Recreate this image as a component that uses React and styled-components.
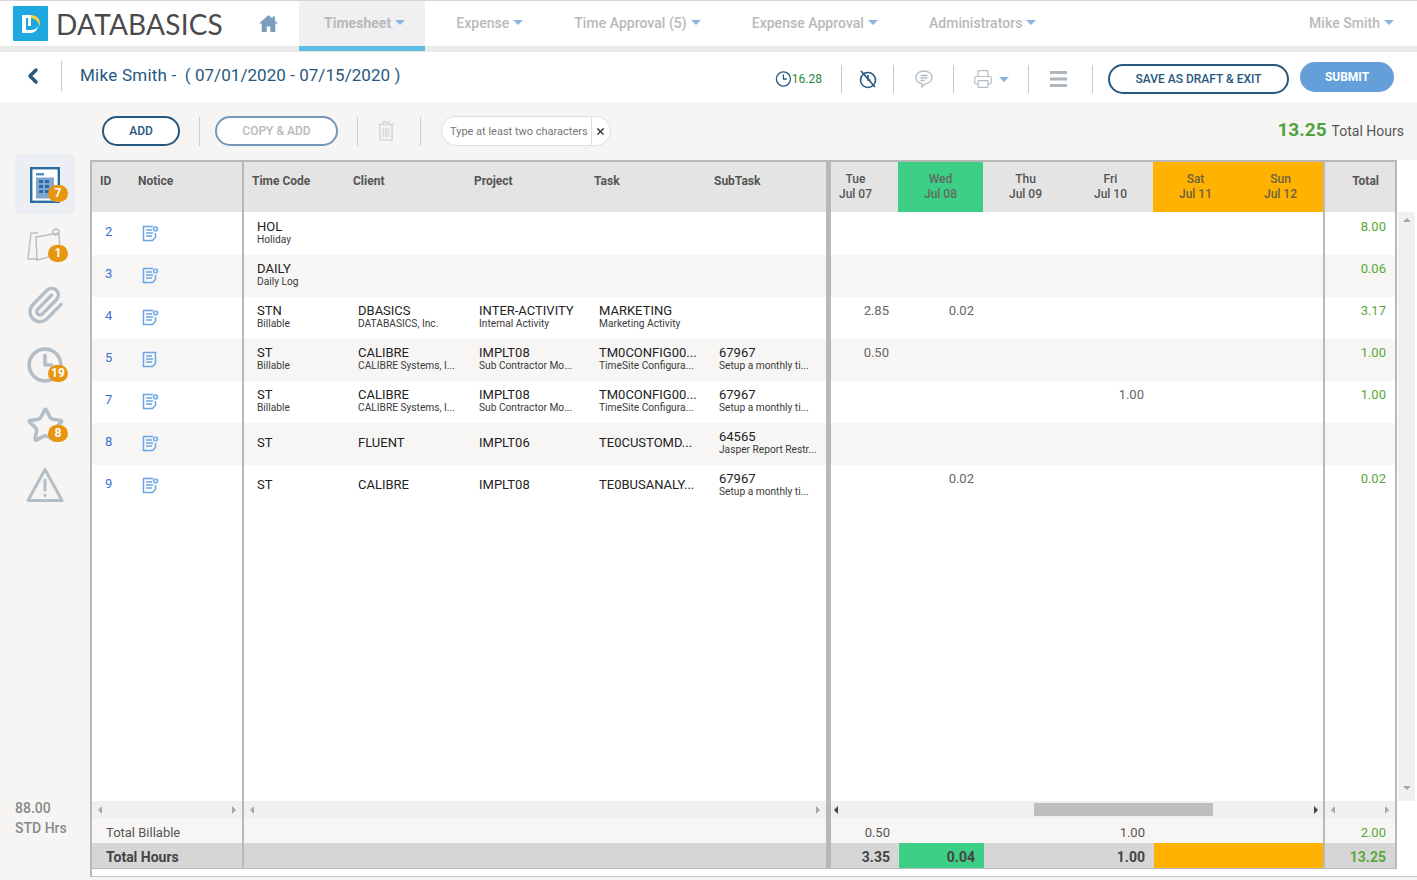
import React from 'react';
import styled, { createGlobalStyle } from 'styled-components';
import { Paperclip, Clock3, Star, Printer, ChevronLeft, X } from 'lucide-react';

const GlobalStyle = createGlobalStyle`
  html, body {
    margin: 0;
    height: 100%;
    overflow: hidden;
    background: #f6f5f4;
    font-family: Roboto, "Liberation Sans", sans-serif;
  }
  * { box-sizing: border-box; }
`;

const Page = styled.div`
  height: 880px;
  display: flex;
  flex-direction: column;
  border-top: 1px solid #d4d4d4;
`;

/* top nav */
const Nav = styled.nav`
  height: 51px;
  flex: none;
  display: flex;
  background: #fff;
  border-bottom: 6px solid #ebebeb;
`;

const Brand = styled.div`
  width: 299px;
  display: flex;
  align-items: center;
  padding-left: 13px;
`;

const BrandName = styled.span`
  margin-left: 8px;
  font-family: Lato, sans-serif;
  font-size: 28px;
  color: #4a4a4a;
  letter-spacing: 0.2px;
`;

const HomeIcon = styled.svg`
  margin-left: 36px;
  width: 19px;
  height: 17px;
`;

const NavItem = styled.div`
  display: flex;
  align-items: center;
  height: 50px;
  padding: 0 ${(p) => (p.$right ? '23px' : '20px')} ${(p) => (p.$active ? '2px' : '7px')} ${(p) => (p.$active ? '25px' : '31px')};
  font-size: 14px;
  letter-spacing: 0.03px;
  font-weight: ${(p) => (p.$active ? 700 : 500)};
  color: #b9b9b9;
  background: ${(p) => (p.$active ? '#f0f0f3' : 'transparent')};
  border-bottom: ${(p) => (p.$active ? '5px solid #5bbce4' : 'none')};
  margin-left: ${(p) => (p.$right ? 'auto' : '0')};
`;

const Caret = styled.span`
  display: inline-block;
  margin-left: ${(p) => p.$ml || 4}px;
  width: 0;
  height: 0;
  border-left: 5px solid transparent;
  border-right: 5px solid transparent;
  border-top: 5px solid #8cb6e2;
`;

/* name + actions */
const SubHeader = styled.header`
  height: 50px;
  flex: none;
  display: flex;
  align-items: center;
  background: #fff;
  padding-right: 23px;
`;

const Back = styled.div`
  width: 62px;
  height: 30px;
  margin-top: -3px;
  padding-left: 21px;
  display: flex;
  align-items: center;
  color: #26577f;
  border-right: 1px solid #c8c8c8;
`;

const Title = styled.h1`
  margin: -4px 0 0 18px;
  font-size: 17px;
  font-weight: 400;
  color: #26577f;
  letter-spacing: 0.05px;
  white-space: pre;
`;

const TitleName = styled.span`
  letter-spacing: 0.25px;
`;

const Tools = styled.div`
  margin-left: auto;
  padding-top: 4px;
  display: flex;
  align-items: center;
`;

const Tool = styled.div`
  height: 28px;
  width: ${(p) => p.$w}px;
  padding-right: ${(p) => p.$pr || 0}px;
  display: flex;
  align-items: center;
  justify-content: center;
  color: #b4bcc3;
  border-right: 1px solid #c8c8c8;
`;

const TimeValue = styled.span`
  font-size: 12px;
  color: #1f8a3c;
`;

const OutlineButton = styled.button`
  height: 30px;
  padding: 0;
  width: ${(p) => p.$w}px;
  margin-left: ${(p) => p.$ml || 0}px;
  border: 2px solid ${(p) => (p.$muted ? '#7297b8' : '#26577f')};
  border-radius: 15px;
  background: #fff;
  font: 500 12px Roboto, sans-serif;
  color: ${(p) => (p.$muted ? '#b9b9b9' : '#26577f')};
`;

const SubmitButton = styled.button`
  height: 30px;
  width: 94px;
  margin: -4px 0 0 11px;
  border: 0;
  border-radius: 15px;
  background: #659fda;
  color: #fff;
  font: 700 12px Roboto, sans-serif;
`;

/* main area */
const Body = styled.div`
  flex: 1;
  display: flex;
  min-height: 0;
`;

const Sidebar = styled.aside`
  width: 90px;
  flex: none;
  display: flex;
  flex-direction: column;
  align-items: flex-start;
  padding: 52px 0 42px 15px;
`;

const SideItem = styled.div`
  position: relative;
  width: 60px;
  height: 60px;
  padding-top: ${(p) => (p.$active ? 1 : 2)}px;
  display: flex;
  align-items: center;
  justify-content: center;
  color: #b4bec6;
  border-radius: 6px;
  background: ${(p) => (p.$active ? '#ebeff4' : 'transparent')};
`;

const Badge = styled.span`
  position: absolute;
  right: 7px;
  bottom: 12px;
  min-width: 20px;
  height: 17px;
  border-radius: 9px;
  background: #e8950f;
  color: #fff;
  font-size: 12px;
  font-weight: 700;
  line-height: 17px;
  text-align: center;
`;

const StdHours = styled.div`
  margin-top: auto;
  font-size: 14px;
  font-weight: 500;
  line-height: 20px;
  color: #8a8a8a;
`;

const Content = styled.main`
  flex: 1;
  min-width: 0;
  display: flex;
  flex-direction: column;
`;

const Toolbar = styled.div`
  height: 58px;
  flex: none;
  display: flex;
  align-items: center;
  padding: 0 13px 0 12px;
`;

const Sep = styled.span`
  width: 1px;
  height: 29px;
  margin: 0 ${(p) => p.$r}px 0 ${(p) => p.$l}px;
  background: #ccd0d4;
`;

const Search = styled.div`
  width: 170px;
  height: 30px;
  display: flex;
  align-items: center;
  border: 1px solid #ddd;
  border-radius: 15px;
  background: #fff;
  padding-left: 8px;
  font-size: 11px;
  color: #777;
  white-space: nowrap;
`;

const SearchClear = styled.span`
  margin-left: 3px;
  height: 28px;
  flex: 1;
  display: flex;
  align-items: center;
  justify-content: center;
  border-left: 1px solid #ddd;
  color: #222;
`;

const HoursSummary = styled.div`
  margin: -4px 0 0 auto;
  font-size: 14px;
  color: #555;
`;

const HoursBig = styled.b`
  font-size: 19px;
  font-weight: 700;
  color: #4ea23c;
  margin-right: 5px;
`;

const GridFrame = styled.div`
  flex: 1;
  display: flex;
  min-height: 0;
  background: #fff;
  border-left: 2px solid #b8b8b8;
  border-bottom: 1px solid #c4c4c4;
  margin-bottom: 3px;
  padding-bottom: 7px;
`;

const Panels = styled.div`
  width: 1305px;
  flex: none;
  display: flex;
  border-top: 2px solid #b8b8b8;
  border-bottom: 1px solid #b8b8b8;
  border-right: 2px solid #b8b8b8;
`;

const Panel = styled.section`
  width: ${(p) => p.$w}px;
  flex: none;
  display: flex;
  flex-direction: column;
  overflow: hidden;
  border-right: ${(p) => p.$divider || 0}px solid #b8b8b8;
`;

const HeadRow = styled.div`
  height: 50px;
  flex: none;
  display: ${(p) => (p.$cols ? 'grid' : 'flex')};
  grid-template-columns: ${(p) => p.$cols};
  padding-left: ${(p) => p.$pl || 0}px;
  background: #e4e4e4;
  font-size: 12px;
  font-weight: 700;
  color: #555;
`;

const HeadCell = styled.div`
  padding: 12px 0 0 ${(p) => (p.$flush ? 0 : 4)}px;
  line-height: 15px;
`;

const Rows = styled.div`
  flex: 1;
  padding-top: 1px;
`;

const Row = styled.div`
  height: 42px;
  display: ${(p) => (p.$cols ? 'grid' : 'flex')};
  grid-template-columns: ${(p) => p.$cols};
  padding-left: ${(p) => p.$pl || 0}px;
  background: ${(p) => (p.$alt ? '#f7f6f5' : '#fff')};
`;

const IdCell = styled.div`
  padding: 11px 0 0 5px;
  font-size: 13px;
  color: #3a6fd0;
`;

const NoticeCell = styled.div`
  padding: 12px 0 0 4px;
`;

const CodeCell = styled.div`
  padding-left: 9px;
  min-width: 0;
  display: flex;
  flex-direction: column;
  justify-content: center;
  padding-bottom: 2px;
`;

const CodeMain = styled.div`
  font-size: 13px;
  line-height: 14px;
  color: #222;
  white-space: nowrap;
`;

const CodeSub = styled.div`
  font-size: 10.2px;
  line-height: 12px;
  margin-bottom: 1px;
  color: #3a3a3a;
  white-space: nowrap;
`;

const DayStrip = styled.div`
  display: flex;
  height: 100%;
  margin-left: ${(p) => p.$shift}px;
`;

const DayHead = styled.div`
  width: 85px;
  flex: none;
  padding-top: 10px;
  text-align: center;
  font-weight: 500;
  line-height: 15px;
  background: ${(p) => p.$bg || 'transparent'};
  color: ${(p) => p.$fg || '#555'};
`;

const HourCell = styled.div`
  width: 85px;
  flex: none;
  padding: 6px 9px 0 0;
  text-align: right;
  font-size: 13px;
  color: #666;
`;

const TotalHead = styled.div`
  width: 100%;
  padding: 12px 16px 0 0;
  text-align: right;
  line-height: 15px;
`;

const TotalCell = styled.div`
  width: 100%;
  padding: 6px 9px 0 0;
  text-align: right;
  font-size: 13px;
  color: #5aa83a;
`;

const HScroll = styled.div`
  height: 17px;
  flex: none;
  display: flex;
  align-items: center;
  padding: ${(p) => (p.$tight ? '0 5px 0 3px' : '0 6px')};
  background: #f0f0f0;
`;

const Arrow = styled.span`
  width: 0;
  height: 0;
  border-top: 4px solid transparent;
  border-bottom: 4px solid transparent;
  border-${(p) => (p.$dir === 'left' ? 'right' : 'left')}: 4px solid ${(p) => (p.$dark ? '#444' : '#a8a8a8')};
  margin-left: ${(p) => (p.$end ? 'auto' : '0')};
`;

const Thumb = styled.span`
  width: 179px;
  height: 13px;
  margin-left: 196px;
  background: #bebebe;
`;

const FootRow = styled.div`
  height: 25px;
  flex: none;
  display: flex;
  overflow: hidden;
  line-height: 29px;
  background: ${(p) => (p.$total ? '#d6d6d6' : '#f7f6f5')};
  font-size: ${(p) => (p.$total ? 14 : 13)}px;
  font-weight: ${(p) => (p.$total ? 700 : 400)};
  color: ${(p) => (p.$total ? '#444' : '#555')};
`;

const FootLabel = styled.span`
  padding-left: 14px;
`;

const FootCell = styled.div`
  width: 85px;
  flex: none;
  height: 100%;
  padding-right: 9px;
  text-align: right;
  background: ${(p) => p.$bg || 'transparent'};
`;

const FootTotal = styled.div`
  width: 100%;
  padding-right: 9px;
  text-align: right;
  color: #5aa83a;
`;

const VScroll = styled.div`
  flex: 1;
  margin: 52px 2px 68px 1px;
  padding: 6px 0 11px;
  display: flex;
  flex-direction: column;
  justify-content: space-between;
  align-items: center;
  background: #f0f0f0;
`;

const VArrow = styled.span`
  width: 0;
  height: 0;
  border-left: 4px solid transparent;
  border-right: 4px solid transparent;
  border-${(p) => (p.$up ? 'bottom' : 'top')}: 4px solid #a8a8a8;
`;

const NoticeIcon = ({ plus }) => (
  <svg width="17" height="17" viewBox="0 0 17 17" fill="none" stroke="#6aa5e3">
    <path d="M11 1.500H1.500v14h9l3-3V8" strokeWidth="1.500" />
    <path d="M4 5h6M4 8h7M4 11h6" strokeWidth="1.300" />
    {plus ? (
      <>
        <circle cx="13.500" cy="4" r="3" fill="#6aa5e3" stroke="#fff" strokeWidth="0.6" />
        <path d="M12 4h3M13.500 2.500v3" stroke="#fff" strokeWidth="0.8" />
      </>
    ) : (
      <path d="M11 1.500h2.500V8" strokeWidth="1.500" />
    )}
  </svg>
);

const TimesheetIcon = () => (
  <svg width="30" height="36" viewBox="0 0 30 36">
    <rect x="1.200" y="1.200" width="27.600" height="33.600" fill="#fff" stroke="#2b6aa3" strokeWidth="2.400" />
    <rect x="6" y="6" width="8" height="2.500" fill="#5d8dbb" />
    <rect x="6" y="10.500" width="18" height="21" fill="#7fa6cc" />
    <path d="M9 13h4v3H9zM15 13h4v3h-4zM9 18h4v3H9zM15 18h4v3h-4zM9 23h4v3H9zM15 23h4v3h-4z" fill="#2b6aa3" />
  </svg>
);

const NotesIcon = () => (
  <svg width="38" height="36" viewBox="0 0 38 36" fill="none" stroke="#b8c1c8" strokeWidth="1.500">
    <path d="M12 6H5L2 32h10" />
    <path d="M10 10 33 6l1 21-23 6z" />
    <circle cx="30" cy="5" r="3" />
  </svg>
);

const AlertIcon = () => (
  <svg width="38" height="36" viewBox="0 0 38 36" fill="none" stroke="#b4bec6" strokeWidth="3" strokeLinejoin="round" strokeLinecap="round">
    <path d="M19 2.500 36 33.500H2z" />
    <path d="M19 13v10M19 28v.5" />
  </svg>
);

const ClockOff = () => (
  <svg width="18" height="20" viewBox="0 0 18 20" fill="none" stroke="#26577f" strokeWidth="1.600">
    <circle cx="9" cy="11" r="7.500" />
    <path d="M9 6v5h2.500M2 2l14 16" />
  </svg>
);

const Bubble = () => (
  <svg width="18" height="18" viewBox="0 0 18 18" fill="none" stroke="#b4bcc3" strokeWidth="1.300">
    <path d="M9 1c4.500 0 8 2.800 8 6.500S13.500 14 10 14l-3 3v-3.400C3.500 13 1 10.800 1 7.500 1 3.800 4.500 1 9 1z" />
    <path d="M5.500 5.500h7M5.500 8h7M5.500 10.500h4" />
  </svg>
);

const Menu = () => (
  <svg width="17" height="16" viewBox="0 0 17 16" fill="#aeb6bd">
    <rect width="17" height="3" />
    <rect y="6.500" width="17" height="3" />
    <rect y="13" width="17" height="3" />
  </svg>
);

const Trash = () => (
  <svg width="16" height="20" viewBox="0 0 16 20" fill="none" stroke="#d3d8dc" strokeWidth="1.600">
    <path d="M0 3.500h16M5 3V1h6v2M2 4v15h12V4M5.500 7v9M8 7v9M10.500 7v9" />
  </svg>
);

const Logo = () => (
  <svg width="35" height="35" viewBox="0 0 35 35">
    <rect width="35" height="35" rx="1" fill="#1fa8e0" />
    <path d="M9 9h9v3h-5v12h5c3 0 6-1.500 7-4-.5 4.500-3.500 7-8 7H9z" fill="#fff" />
    <rect x="15" y="11" width="3" height="9" fill="#fff" />
    <path d="M18 9c5 0 9 3.500 9 8.500 0 1-.2 2-.6 3-.6-4.500-3.900-8-8.400-8.500z" fill="#f3d33c" />
  </svg>
);

const headCols = [
  { label: 'Time Code' },
  { label: 'Client' },
  { label: 'Project' },
  { label: 'Task' },
  { label: 'SubTask' },
];

const days = [
  { d: 'Tue', date: 'Jul 07' },
  { d: 'Wed', date: 'Jul 08', bg: '#3ccf85', fg: '#5f6b60' },
  { d: 'Thu', date: 'Jul 09' },
  { d: 'Fri', date: 'Jul 10' },
  { d: 'Sat', date: 'Jul 11', bg: '#ffb300', fg: '#6b6044' },
  { d: 'Sun', date: 'Jul 12', bg: '#ffb300', fg: '#6b6044' },
];

const rows = [
  { id: 2, plus: true, code: [['HOL', 'Holiday']], hours: [], total: '8.00' },
  { id: 3, plus: true, code: [['DAILY', 'Daily Log']], hours: [], total: '0.06' },
  {
    id: 4,
    plus: true,
    code: [
      ['STN', 'Billable'],
      ['DBASICS', 'DATABASICS, Inc.'],
      ['INTER-ACTIVITY', 'Internal Activity'],
      ['MARKETING', 'Marketing Activity'],
    ],
    hours: ['2.85', '0.02'],
    total: '3.17',
  },
  {
    id: 5,
    plus: false,
    code: [
      ['ST', 'Billable'],
      ['CALIBRE', 'CALIBRE Systems, I...'],
      ['IMPLT08', 'Sub Contractor Mo...'],
      ['TM0CONFIG00...', 'TimeSite Configura...'],
      ['67967', 'Setup a monthly ti...'],
    ],
    hours: ['0.50'],
    total: '1.00',
  },
  {
    id: 7,
    plus: true,
    code: [
      ['ST', 'Billable'],
      ['CALIBRE', 'CALIBRE Systems, I...'],
      ['IMPLT08', 'Sub Contractor Mo...'],
      ['TM0CONFIG00...', 'TimeSite Configura...'],
      ['67967', 'Setup a monthly ti...'],
    ],
    hours: ['', '', '', '1.00'],
    total: '1.00',
  },
  {
    id: 8,
    plus: true,
    code: [['ST'], ['FLUENT'], ['IMPLT06'], ['TE0CUSTOMD...'], ['64565', 'Jasper Report Restr...']],
    hours: [],
    total: '',
  },
  {
    id: 9,
    plus: true,
    code: [['ST'], ['CALIBRE'], ['IMPLT08'], ['TE0BUSANALY...'], ['67967', 'Setup a monthly ti...']],
    hours: ['', '0.02'],
    total: '0.02',
  },
];

const CODE_COLS = '101px 121px 120px 120px 1fr';

export default function App() {
  return (
    <Page>
      <GlobalStyle />
      <Nav>
        <Brand>
          <Logo />
          <BrandName>DATABASICS</BrandName>
          <HomeIcon viewBox="0 0 19 17" fill="#7b9dbd">
            <path d="M9.500 0 0 8.500h2.700V17h5v-5.500h3.600V17h5V8.500H19l-3-2.700V1.500h-2.500v2z" />
          </HomeIcon>
        </Brand>
        <NavItem $active>Timesheet<Caret /></NavItem>
        <NavItem>Expense<Caret /></NavItem>
        <NavItem>Time Approval (5)<Caret /></NavItem>
        <NavItem>Expense Approval<Caret /></NavItem>
        <NavItem>Administrators<Caret /></NavItem>
        <NavItem $right>Mike Smith<Caret /></NavItem>
      </Nav>

      <SubHeader>
        <Back><ChevronLeft size={24} strokeWidth={3.5} /></Back>
        <Title><TitleName>Mike Smith</TitleName>{' -  ( 07/01/2020 - 07/15/2020 )'}</Title>
        <Tools>
          <Tool $w={67} $pr={19}>
            <Clock3 size={18} color="#26577f" strokeWidth={1.8} />
            <TimeValue>16.28</TimeValue>
          </Tool>
          <Tool $w={52}><ClockOff /></Tool>
          <Tool $w={60}><Bubble /></Tool>
          <Tool $w={75}><Printer size={20} strokeWidth={1.4} /><Caret $ml={6} /></Tool>
          <Tool $w={64} $pr={4}><Menu /></Tool>
          <OutlineButton $w={181} $ml={15}>SAVE AS DRAFT &amp; EXIT</OutlineButton>
          <SubmitButton>SUBMIT</SubmitButton>
        </Tools>
      </SubHeader>

      <Body>
        <Sidebar>
          <SideItem $active>
            <TimesheetIcon />
            <Badge>7</Badge>
          </SideItem>
          <SideItem><NotesIcon /><Badge>1</Badge></SideItem>
          <SideItem><Paperclip size={40} strokeWidth={2} /></SideItem>
          <SideItem><Clock3 size={38} strokeWidth={2.3} /><Badge>19</Badge></SideItem>
          <SideItem><Star size={39} strokeWidth={2.2} /><Badge>8</Badge></SideItem>
          <SideItem><AlertIcon /></SideItem>
          <StdHours>88.00<br />STD Hrs</StdHours>
        </Sidebar>

        <Content>
          <Toolbar>
            <OutlineButton $w={78}>ADD</OutlineButton>
            <Sep $l={19} $r={15} />
            <OutlineButton $w={123} $muted>COPY &amp; ADD</OutlineButton>
            <Sep $l={19} $r={20} />
            <Trash />
            <Sep $l={26} $r={20} />
            <Search>
              Type at least two characters
              <SearchClear><X size={11} strokeWidth={2.5} /></SearchClear>
            </Search>
            <HoursSummary><HoursBig>13.25</HoursBig>Total Hours</HoursSummary>
          </Toolbar>

          <GridFrame>
            <Panels>
              <Panel $w={152} $divider={2}>
                <HeadRow $cols="38px 1fr" $pl={8}>
                  <HeadCell $flush>ID</HeadCell>
                  <HeadCell $flush>Notice</HeadCell>
                </HeadRow>
                <Rows>
                  {rows.map((r, i) => (
                    <Row key={r.id} $alt={i % 2 === 1} $cols="38px 1fr" $pl={8}>
                      <IdCell>{r.id}</IdCell>
                      <NoticeCell><NoticeIcon plus={r.plus} /></NoticeCell>
                    </Row>
                  ))}
                </Rows>
                <HScroll><Arrow $dir="left" /><Arrow $end /></HScroll>
                <FootRow><FootLabel>Total Billable</FootLabel></FootRow>
                <FootRow $total><FootLabel>Total Hours</FootLabel></FootRow>
              </Panel>

              <Panel $w={587} $divider={5}>
                <HeadRow $cols={CODE_COLS} $pl={4}>
                  {headCols.map((c) => <HeadCell key={c.label}>{c.label}</HeadCell>)}
                </HeadRow>
                <Rows>
                  {rows.map((r, i) => (
                    <Row key={r.id} $alt={i % 2 === 1} $cols={CODE_COLS} $pl={4}>
                      {r.code.map(([main, sub], j) => (
                        <CodeCell key={j}>
                          <CodeMain>{main}</CodeMain>
                          {sub && <CodeSub>{sub}</CodeSub>}
                        </CodeCell>
                      ))}
                    </Row>
                  ))}
                </Rows>
                <HScroll><Arrow $dir="left" /><Arrow $end /></HScroll>
                <FootRow />
                <FootRow $total />
              </Panel>

              <Panel $w={494} $divider={2}>
                <HeadRow>
                  <DayStrip $shift={-18}>
                    {days.map((d) => (
                      <DayHead key={d.d} $bg={d.bg} $fg={d.fg}>{d.d}<br />{d.date}</DayHead>
                    ))}
                  </DayStrip>
                </HeadRow>
                <Rows>
                  {rows.map((r, i) => (
                    <Row key={r.id} $alt={i % 2 === 1}>
                      <DayStrip $shift={-18}>
                        {days.map((d, j) => <HourCell key={d.d}>{r.hours[j]}</HourCell>)}
                      </DayStrip>
                    </Row>
                  ))}
                </Rows>
                <HScroll $tight>
                  <Arrow $dir="left" $dark />
                  <Thumb />
                  <Arrow $end $dark />
                </HScroll>
                <FootRow>
                  <DayStrip $shift={-17}>
                    <FootCell>0.50</FootCell>
                    <FootCell />
                    <FootCell />
                    <FootCell>1.00</FootCell>
                  </DayStrip>
                </FootRow>
                <FootRow $total>
                  <DayStrip $shift={-17}>
                    <FootCell>3.35</FootCell>
                    <FootCell $bg="#3ccf85">0.04</FootCell>
                    <FootCell />
                    <FootCell>1.00</FootCell>
                    <FootCell $bg="#ffb300" />
                    <FootCell $bg="#ffb300" />
                  </DayStrip>
                </FootRow>
              </Panel>

              <Panel $w={70}>
                <HeadRow><TotalHead>Total</TotalHead></HeadRow>
                <Rows>
                  {rows.map((r, i) => (
                    <Row key={r.id} $alt={i % 2 === 1}><TotalCell>{r.total}</TotalCell></Row>
                  ))}
                </Rows>
                <HScroll><Arrow $dir="left" /><Arrow $end /></HScroll>
                <FootRow><FootTotal>2.00</FootTotal></FootRow>
                <FootRow $total><FootTotal>13.25</FootTotal></FootRow>
              </Panel>
            </Panels>
            <VScroll>
              <VArrow $up />
              <VArrow />
            </VScroll>
          </GridFrame>
        </Content>
      </Body>
    </Page>
  );
}
